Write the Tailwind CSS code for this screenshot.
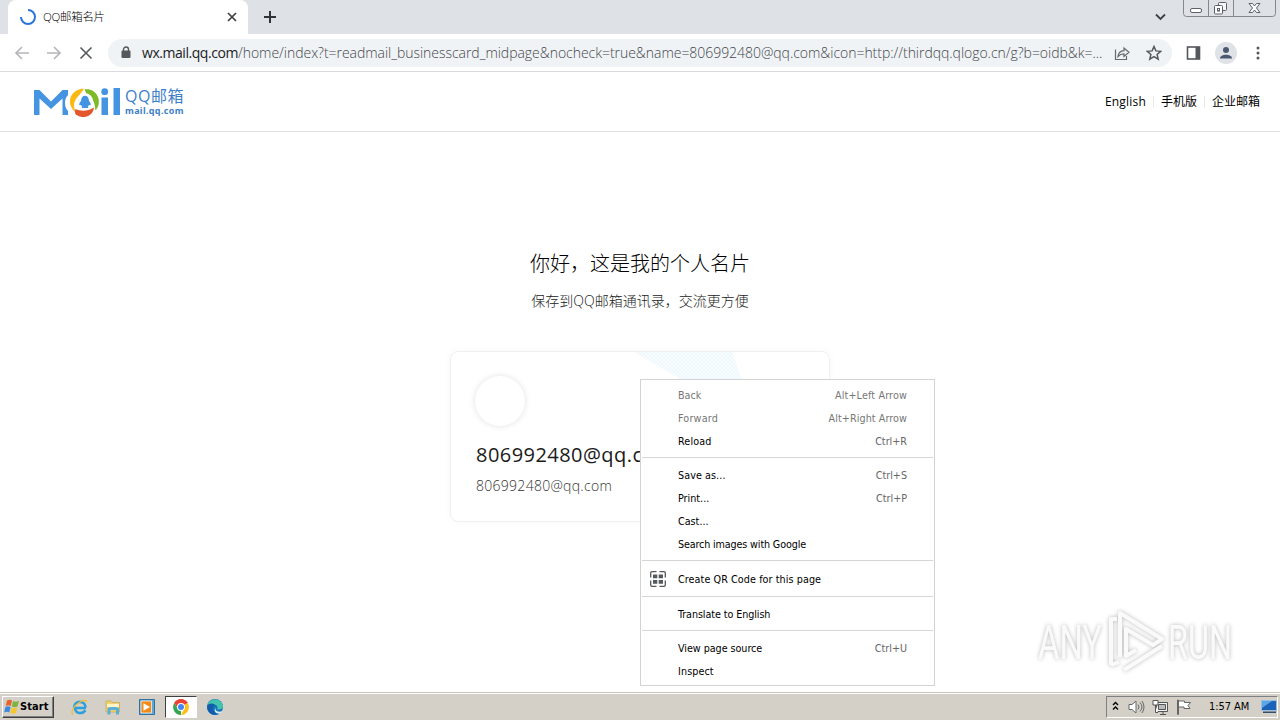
<!DOCTYPE html>
<html lang="zh-CN">
<head>
    <meta charset="UTF-8">
    <meta name="viewport" content="width=device-width, initial-scale=1.0">
    <title>QQ邮箱名片</title>
    <script src="https://cdn.jsdelivr.net/npm/@tailwindcss/browser@4"></script>
</head>
<body class="relative flex h-[720px] w-[1280px] flex-col overflow-hidden bg-white font-['Open_Sans','Noto_Sans_CJK_SC',sans-serif] text-[#222]">
    <!-- Tab strip -->
    <div class="relative flex h-[34px] shrink-0 bg-[#dee1e6] pl-2">
        <div class="flex w-60 items-center rounded-t-lg bg-white pl-[11px] pr-2.5">
            <svg class="size-[18px]" viewBox="0 0 18 18" fill="none" stroke="#2b76dc" stroke-width="2"><path d="M9 2a7 7 0 1 1-7 7"/></svg>
            <span class="ml-[6px] flex-1 text-[11.5px] font-light tracking-[-0.3px] text-black">QQ邮箱名片</span>
            <svg class="size-3" viewBox="0 0 12 12" stroke="#3c4043" stroke-width="1.7"><path d="M2 2l8 8M10 2l-8 8"/></svg>
        </div>
        <svg class="ml-[15px] mt-[10px] size-[14px]" viewBox="0 0 14 14" stroke="#30343a" stroke-width="2"><path d="M7 1v12M1 7h12"/></svg>
        <svg class="ml-auto mr-[114px] mt-[13px] h-2 w-[11px]" viewBox="0 0 11 8" fill="none" stroke="#3c4043" stroke-width="1.8"><path d="M1 1.5l4.5 4.5L10 1.5"/></svg>
        <!-- Window buttons -->
        <svg class="absolute right-0 top-0 h-[18px] w-[98px]" viewBox="0 0 98 18" fill="none" stroke="#83878f">
            <path d="M1.500 0v13.500a3 3 0 0 0 3 3h86a3 3 0 0 0 3-3V0M26.500 0v16M51.500 0v16"/>
            <g stroke="#5b606b">
                <rect x="8.500" y="8.500" width="11" height="4" rx="1.500" fill="#fff"/>
                <rect x="36.500" y="2.500" width="8" height="8" rx="1" fill="#f5f6f8"/>
                <rect x="32.500" y="5.500" width="8" height="8.500" rx="1" fill="#fff"/>
                <rect x="35.500" y="8.500" width="2" height="2.500"/>
                <path fill="#fff" d="M67 3.500h3.500l2 2.500 2-2.500H78L74.500 8l3.500 4.500h-3.500l-2-2.500-2 2.500H67L70.500 8z"/>
            </g>
        </svg>
    </div>

    <!-- Toolbar -->
    <div class="flex h-[38px] shrink-0 items-center border-b border-[#d9dbde] bg-white pl-[14px] pr-[14px]">
        <svg class="size-4" viewBox="0 0 16 16" fill="none" stroke="#b5b7ba" stroke-width="1.700"><path d="M15 8H2M8 2L2 8l6 6"/></svg>
        <svg class="ml-4 size-4" viewBox="0 0 16 16" fill="none" stroke="#b5b7ba" stroke-width="1.700"><path d="M1 8h13M8 2l6 6-6 6"/></svg>
        <svg class="ml-4 size-4" viewBox="0 0 16 16" stroke="#55585c" stroke-width="1.600"><path d="M2.500 2.500l11 11M13.500 2.500l-11 11"/></svg>
        <div class="ml-[14px] flex h-7 w-[1064px] shrink-0 items-center rounded-full bg-[#f0f3f5] pl-[13px] pr-2.5">
            <svg class="h-[13px] w-[10px]" viewBox="0 0 10 13"><rect x=".5" y="4.500" width="9" height="7.500" rx="1" fill="#55585c"/><path d="M2.500 5V3.500a2.500 2.500 0 0 1 5 0V5" fill="none" stroke="#55585c" stroke-width="1.400"/></svg>
            <span class="ml-[11px] w-0 flex-1 whitespace-nowrap text-sm font-light tracking-[-0.035px] text-[#43474c]"><span class="font-normal tracking-[-0.450px] text-[#202124]">wx.mail.qq.com</span>/home/index?t=readmail_businesscard_midpage&amp;nocheck=true&amp;name=806992480@qq.com&amp;icon=http://thirdqq.qlogo.cn/g?b=oidb&amp;k=...</span>
            <svg class="size-4" viewBox="0 0 16 16" fill="none" stroke="#66696d" stroke-width="1.200"><path d="M1.500 4.500v10h11V11M4 11.500c.4-3.800 2.500-5.700 6-5.900V3l5 4.300-5 4.200V8.800c-2.600 0-4.300.7-6 2.700z"/></svg>
            <svg class="ml-4 size-4" viewBox="0 0 16 16" fill="none" stroke="#55585c" stroke-width="1.500"><path d="M8 1.500l1.900 4.400 4.800.4-3.600 3.200 1.100 4.700L8 11.700l-4.200 2.500 1.100-4.700-3.600-3.200 4.800-.4z"/></svg>
        </div>
        <svg class="ml-[14px] h-[14px] w-[15px] shrink-0" viewBox="0 0 15 14"><rect x="1.500" y="1" width="12" height="12" fill="#fff" stroke="#55585c" stroke-width="1.600"/><path d="M9.500 1H14v12H9.500z" fill="#55585c"/></svg>
        <svg class="ml-[14px] size-[22px] shrink-0" viewBox="0 0 22 22"><circle cx="11" cy="11" r="11" fill="#dfe2e7"/><circle cx="11" cy="8" r="3" fill="#4b5872"/><path d="M5 16.500c0-5 12-5 12 0z" fill="#4b5872"/></svg>
        <svg class="ml-[19px] h-[14px] w-1 shrink-0" viewBox="0 0 4 14" fill="#55585c"><circle cx="2" cy="2" r="1.500"/><circle cx="2" cy="7" r="1.500"/><circle cx="2" cy="12" r="1.500"/></svg>
    </div>

    <!-- Mail header -->
    <header class="flex h-[60px] shrink-0 items-center border-b border-[#dfdfdf] pl-[33px] pr-5">
        <svg class="mt-px h-[30px] w-[88px]" viewBox="0 0 88 30">
            <path fill="#4594e2" d="M1 28V3h5.500L18 14.500 29.500 3H35v5c-2.500 3-3 5-3 8s.5 5 3 8v4h-5.500V11.500L18 22 6.500 11.500V28zM68.500 10.500H75V28h-6.500zM80.500 1H87v27h-6.500z"/>
            <circle cx="71.700" cy="4.700" r="3.400" fill="#4594e2"/>
            <path fill="#fdb913" d="M51 1.800C40 1.500 34 12 38.500 20.500c1 2 2.500 3.700 4.500 5-3-6-2.500-11 1.500-15.500C47 7.500 49 5 51 1.800z"/>
            <path fill="#7dba27" d="M51.500 2.500C60 .5 68 9 65.500 18c-.7 2.300-1.700 4-3.200 5.500 0-7-2.300-12.500-8-15z"/>
            <path fill="#e4572e" d="M42.500 22c5 2.500 12 2.500 18.500-1.500-.5 8-10 12.500-17.500 7.500-1.500-1.200-2-3.200-1-6z"/>
            <circle cx="52" cy="14.500" r="8.300" fill="#fff"/>
            <path fill="#4594e2" d="M48 14c0-7 8-7 8 0 1.300 1.300 1.900 2.600 1.700 4.300l-1.700-.2c-.3.800-.7 1.200-1.300 1.700l.8 1.200h-7l.8-1.200c-.6-.5-1-.9-1.300-1.700l-1.700.2c-.2-1.700.4-3 1.700-4.300z"/>
        </svg>
        <div class="ml-1 w-20 whitespace-nowrap text-[#3d80c8]">
            <div class="h-[15px] text-[16px] leading-[19px] tracking-[0.5px]">QQ邮箱</div>
            <div class="mt-1 text-[9px] font-bold leading-[10px] tracking-[0.350px] font-['Noto_Sans',sans-serif]">mail.qq.com</div>
        </div>
        <nav class="ml-auto flex items-center text-xs text-black">
            <a class="tracking-[0.2px]">English</a>
            <i class="mx-[7px] h-3 w-px bg-[#e8e8e8]"></i>
            <a>手机版</a>
            <i class="mx-[7px] h-3 w-px bg-[#e8e8e8]"></i>
            <a>企业邮箱</a>
        </nav>
    </header>

    <!-- Business card page -->
    <main class="flex flex-1 flex-col items-center pt-[117px]">
        <h1 class="text-xl font-light leading-[30px] text-black">你好，这是我的个人名片</h1>
        <p class="mt-[11px] text-sm font-light leading-[22px] text-[#222]">保存到QQ邮箱通讯录，交流更方便</p>
        <section class="relative mt-[39px] h-[171px] w-[380px] overflow-hidden rounded-lg border border-[#eef0f1] pl-6 pt-6 shadow-[0_0_10px_rgba(0,0,0,0.03)]">
            <svg class="absolute left-[183px] top-0 h-7 w-[110px]" viewBox="0 0 110 28">
                <defs><pattern id="mesh" width="4" height="4" patternUnits="userSpaceOnUse"><path d="M0 0l4 4M4 0L0 4" stroke="#e8f5fc" stroke-width=".6"/></pattern></defs>
                <path d="M0 0h98l10 28H48z" fill="#f8fcfe"/>
                <path d="M0 0h98l10 28H48z" fill="url(#mesh)"/>
            </svg>
            <div class="size-[50px] rounded-full bg-white shadow-[0_0_6px_rgba(0,0,0,0.12)]"></div>
            <div class="ml-px mt-[14px] text-xl leading-[30px] tracking-[0.450px] text-[#1b1b1b]">806992480@qq.com</div>
            <div class="ml-px mt-[6px] text-sm font-light leading-5 tracking-[0.280px] text-[#333]">806992480@qq.com</div>
        </section>
    </main>

    <!-- Context menu -->
    <div class="absolute left-[640px] top-[379px] flex h-[307px] w-[295px] flex-col border border-[#d3d3d3] bg-white pt-1 font-['DejaVu_Sans_Condensed','DejaVu_Sans',sans-serif] text-[10.700px] font-stretch-condensed leading-[23px] text-black">
        <div class="flex justify-between pl-[37px] pr-[27px] text-[#777]"><span>Back</span><span class="tracking-[0.150px]">Alt+Left Arrow</span></div>
        <div class="flex justify-between pl-[37px] pr-[27px] text-[#777]"><span class="tracking-[0.200px]">Forward</span><span class="tracking-[0.080px]">Alt+Right Arrow</span></div>
        <div class="flex justify-between pl-[37px] pr-[27px]"><span class="tracking-[0.150px]">Reload</span><span class="text-[#666]">Ctrl+R</span></div>
        <hr class="mx-px mb-[6px] mt-1 border-[#d6d6d6]">
        <div class="flex justify-between pl-[37px] pr-[27px]"><span class="tracking-[0.080px]">Save as...</span><span class="text-[#666]">Ctrl+S</span></div>
        <div class="flex justify-between pl-[37px] pr-[27px]"><span>Print...</span><span class="text-[#666]">Ctrl+P</span></div>
        <div class="pl-[37px]">Cast...</div>
        <div class="pl-[37px] tracking-[-0.140px]">Search images with Google</div>
        <hr class="mx-px mb-[7px] mt-1 border-[#d6d6d6]">
        <div class="flex items-center pl-[9px]">
            <svg class="-mt-px mr-3 size-4" viewBox="0 0 16 16" fill="none" stroke="#55585c" stroke-width="1.300"><path d="M6.500 .7H2A1.300 1.300 0 0 0 .7 2v4.500M9.500 .7H14A1.300 1.300 0 0 1 15.300 2v4.500M6.500 15.300H2A1.300 1.300 0 0 1 .7 14V9.500M9.500 15.300H14a1.300 1.300 0 0 0 1.300-1.300V9.500"/><path fill="#55585c" stroke="none" d="M3 3.500h4.300v3.800H3zM8.700 3.500H13v3.800H8.700zM3 9h4.300v3.800H3zM8.700 9H13v3.800H8.700z"/></svg>
            <span class="tracking-[0.080px]">Create QR Code for this page</span>
        </div>
        <hr class="mx-px mb-[6px] mt-[5px] border-[#d6d6d6]">
        <div class="pl-[37px] tracking-[-0.080px]">Translate to English</div>
        <hr class="mx-px mb-[6px] mt-1 border-[#d6d6d6]">
        <div class="flex justify-between pl-[37px] pr-[27px]"><span class="tracking-[-0.040px]">View page source</span><span class="text-[#666]">Ctrl+U</span></div>
        <div class="pl-[37px] tracking-[0.100px]">Inspect</div>
    </div>

    <!-- Watermark -->
    <svg class="absolute left-[1030px] top-[602px] h-[76px] w-[210px] overflow-visible drop-shadow-[0_0_2px_rgba(0,0,0,0.28)]" viewBox="0 0 210 76" fill="none" stroke="#fafafa" stroke-width="4">
        <g fill="#fafafa" stroke="none" font-family="Roboto, sans-serif" font-size="48">
            <text x="8" y="57" textLength="64" lengthAdjust="spacingAndGlyphs">ANY</text>
            <text x="138" y="57" textLength="64" lengthAdjust="spacingAndGlyphs">RUN</text>
        </g>
        <path stroke-linejoin="round" d="M90 55V11l42 26-9 6-27-16v27l10-6M81 63V17h6M81 63l8-3M94 68l38-24"/>
    </svg>

    <!-- Taskbar -->
    <footer class="relative flex h-7 shrink-0 items-center border-t border-[#c9c5bd] bg-[#d4d0c8] pt-px shadow-[inset_0_1px_0_#fff] font-['DejaVu_Sans_Condensed','DejaVu_Sans',sans-serif]">
        <div class="ml-0.5 flex h-[22px] w-[52px] items-center border border-b-[#404040] border-l-white border-r-[#404040] border-t-white pl-px text-[11px] font-bold text-black shadow-[inset_-1px_-1px_0_#808080]">
            <svg class="size-4 shrink-0" viewBox="0 0 16 16"><path fill="#e8622c" d="M3 1.500c2-1.300 3.500-1 5 0L6.800 7C5 6 3.500 6 1.700 7z"/><path fill="#7fb341" d="M9 2c2 1 3.700 1 6-.2L13.500 7.500c-2 1-3.600 1-5.700 0z"/><path fill="#3a8be0" d="M1.400 8c1.900-1.200 3.400-1 5.200 0l-1.300 5.500c-1.700-1-3.300-1.100-5.100 0z"/><path fill="#f7c62f" d="M7.600 8.400c2 1 3.700 1 5.700.1L12 14c-2 1-3.700 1-5.700 0z"/></svg>
            <span class="tracking-[0.100px]">Start</span>
        </div>
        <svg class="ml-[17px] size-4 overflow-visible" viewBox="0 0 16 16" fill="none"><path d="M15 9H4c.3 6 7 6.500 10.500 2.300M3 8.500C3.500 1 14 1 14.700 8.300" stroke="#2c9fde" stroke-width="2.600"/><path d="M2 15.500c-3-1.500 1-9 6.500-12.200 3.800-2.300 7.500-3 7.200 0" stroke="#f1bd36" stroke-width="1.300"/></svg>
        <svg class="ml-[18px] size-4" viewBox="0 0 16 16"><path fill="#efd271" stroke="#c79e3e" stroke-width=".6" d="M1 2h5l1 1.500h7.500V13H1z"/><path fill="#fff5c8" d="M2 5h12v3H2z"/><path fill="#58afd9" d="M2.500 15.500V9.500C2.500 7.500 14 7.500 14 9.500v6h-3v-4.500h-5.500v4.500z"/></svg>
        <svg class="ml-[18px] size-4" viewBox="0 0 16 16"><path fill="#5ba8dd" stroke="#356f9d" d="M.5.500h15v15H.5z"/><path fill="#f28a18" stroke="#fff" stroke-width=".7" d="M2 2h10.500v12H2z"/><path fill="#fff" d="M4.500 4.200v7.600L11 8z"/></svg>
        <div class="ml-[10px] flex h-[22px] w-8 items-center justify-center border border-b-white border-l-[#404040] border-r-white border-t-[#404040] bg-white">
            <svg class="size-4" viewBox="0 0 16 16"><path fill="#e84335" d="M8 8L1.200 4A7.900 7.900 0 0 1 14.800 4z"/><path fill="#34a553" d="M8 8v8A8 8 0 0 1 1.200 4l4 6z"/><path fill="#fbc116" d="M8 8l6.800-4A8 8 0 0 1 8 16l3-6z"/><path fill="#e84335" d="M8 4h6.800A8 8 0 0 0 1.200 4l3.500 5z"/><circle cx="8" cy="8" r="4" fill="#fff"/><circle cx="8" cy="8" r="3" fill="#4285f4"/></svg>
        </div>
        <svg class="ml-[10px] size-4" viewBox="0 0 16 16"><circle cx="8" cy="8" r="8" fill="#1673bc"/><path fill="#43c5ad" d="M.3 6.500C2-1 14-2 16 7c.2 3-2.500 4-6 3.500 1.500-2 0-5-3-5C4 5.500 2 7 .3 6.500z"/><path fill="#125cad" d="M.2 7c1.500-3.500 6-3 8-1C4.500 7 5 14 11 15.300 5 17.500-.5 13 .2 7z"/><path fill="#e0edf0" d="M8.500 8.500c-1 4 4 5 7 3.500l-1.500 2c-4 2-8-1.500-5.500-5.500z"/></svg>

        <!-- Notification area -->
        <div class="ml-auto mr-0.5 flex h-[22px] w-[172px] items-center border border-b-white border-l-[#808080] border-r-white border-t-[#808080] pl-[5px] text-[11px] text-black">
            <svg class="-mt-0.5 h-2.5 w-[7px]" viewBox="0 0 7 10" fill="none" stroke="#000" stroke-width="1.400"><path d="M1 4l2.500-2.500L6 4M1 8.500L3.500 6 6 8.500"/></svg>
            <svg class="ml-[9px] h-4 w-[17px]" viewBox="0 0 17 16" stroke="#686868"><path fill="#fff" d="M1 5.500h3L8 2v12l-4-3.500H1z"/><path fill="none" d="M10 5.500q2 2.500 0 5M12 3.500q4 4.500 0 9M14 2q4 6 0 12"/></svg>
            <svg class="ml-[7px] size-4" viewBox="0 0 16 16" stroke="#555"><path fill="#f2f2f2" d="M4.500 3.500h11v9h-11z"/><path fill="#bbb" d="M6.500 5.500h7v5h-7zM8 15.500h6M11 12.500v3"/><path fill="#fff" d="M1 1.500h5V6H1zM3.500 6v7.500H6"/></svg>
            <svg class="ml-2 size-4" viewBox="0 0 16 16" stroke="#666" fill="#fff"><path d="M1.500 1v14.500h1V1zM2.500 2h6v1.500h6l-2.500 3 2 3H8V8H2.500z"/></svg>
            <span class="ml-[17px] whitespace-nowrap tracking-[-0.050px]">1:57 AM</span>
            <svg class="ml-auto h-[14px] w-4" viewBox="0 0 16 14"><path fill="#1b62b8" stroke="#9bbfdd" d="M.5.500h15v10H.5z"/><path fill="#5aa6e6" d="M1 1h10L1 8z"/><path fill="#334e68" d="M2 11.500h13V13H2z"/></svg>
        </div>
    </footer>
</body>
</html>
